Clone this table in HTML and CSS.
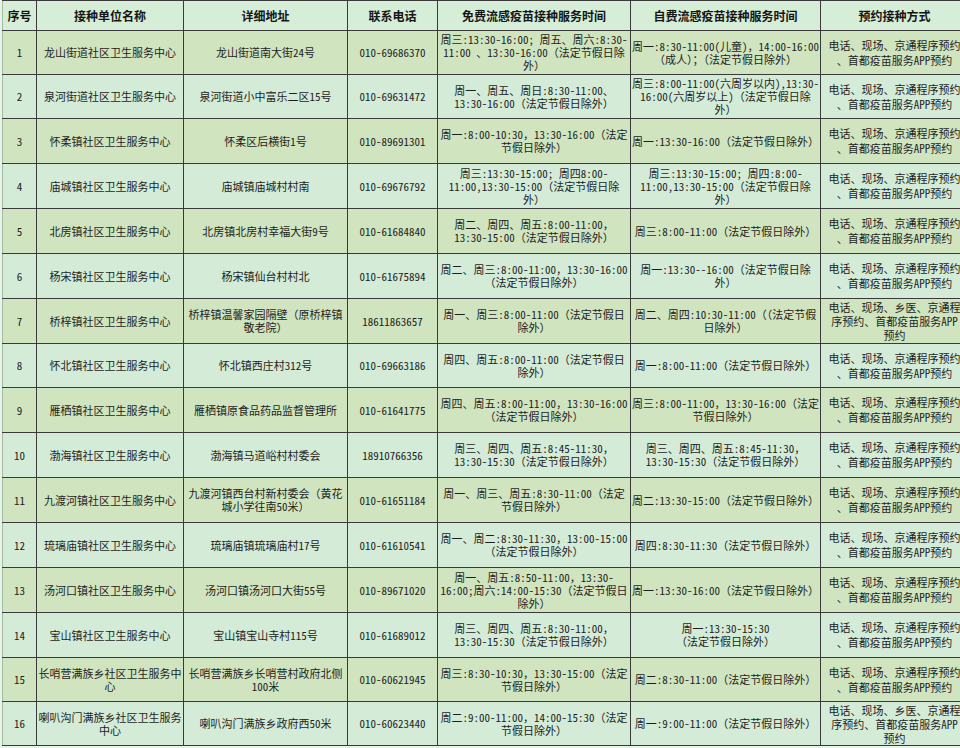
FILE: index.html
```html
<!DOCTYPE html>
<html lang="zh-CN">
<head>
<meta charset="utf-8">
<title>流感疫苗接种服务</title>
<link rel="stylesheet" href="styles.css">
</head>
<body>
<table class="grid">
<colgroup>
<col class="c-no"><col class="c-name"><col class="c-addr"><col class="c-tel"><col class="c-free"><col class="c-self"><col class="c-way">
</colgroup>
<thead>
<tr><th>序号</th><th>接种单位名称</th><th>详细地址</th><th>联系电话</th><th>免费流感疫苗接种服务时间</th><th>自费流感疫苗接种服务时间</th><th>预约接种方式</th></tr>
</thead>
<tbody>
<tr class="odd h44"><td>1</td><td>龙山街道社区卫生服务中心</td><td>龙山街道南大街24号</td><td>010-69686370</td><td class="t3">周三:13:30-16:00; 周五、周六:8:30-<br>11:00 、13:30-16:00（法定节假日除<br>外）</td><td>周一:8:30-11:00(儿童)，14:00-16:00<br>（成人）；（法定节假日除外）</td><td class="way">电话、现场、京通程序预约<br>、首都疫苗服务APP预约</td></tr>
<tr class="even h44"><td>2</td><td>泉河街道社区卫生服务中心</td><td>泉河街道小中富乐二区15号</td><td>010-69631472</td><td>周一、周五、周日:8:30-11:00、<br>13:30-16:00（法定节假日除外）</td><td class="t3">周三:8:00-11:00(六周岁以内),13:30-<br>16:00(六周岁以上)（法定节假日除<br>外）</td><td class="way">电话、现场、京通程序预约<br>、首都疫苗服务APP预约</td></tr>
<tr class="odd h45"><td>3</td><td>怀柔镇社区卫生服务中心</td><td>怀柔区后横街1号</td><td>010-89691301</td><td>周一:8:00-10:30，13:30-16:00（法定<br>节假日除外）</td><td>周一:13:30-16:00（法定节假日除外）</td><td class="way">电话、现场、京通程序预约<br>、首都疫苗服务APP预约</td></tr>
<tr class="even h45"><td>4</td><td>庙城镇社区卫生服务中心</td><td>庙城镇庙城村村南</td><td>010-69676792</td><td class="t3">周三:13:30-15:00; 周四8:00-<br>11:00,13:30-15:00（法定节假日除<br>外）</td><td class="t3">周三:13:30-15:00; 周四:8:00-<br>11:00,13:30-15:00（法定节假日除<br>外）</td><td class="way">电话、现场、京通程序预约<br>、首都疫苗服务APP预约</td></tr>
<tr class="odd h45"><td>5</td><td>北房镇社区卫生服务中心</td><td>北房镇北房村幸福大街9号</td><td>010-61684840</td><td>周二、周四、周五:8:00-11:00，<br>13:30-15:00（法定节假日除外）</td><td>周三:8:00-11:00（法定节假日除外）</td><td class="way">电话、现场、京通程序预约<br>、首都疫苗服务APP预约</td></tr>
<tr class="even h45"><td>6</td><td>杨宋镇社区卫生服务中心</td><td>杨宋镇仙台村村北</td><td>010-61675894</td><td>周二、周三:8:00-11:00，13:30-16:00<br>（法定节假日除外）</td><td>周一:13:30--16:00（法定节假日除<br>外）</td><td class="way">电话、现场、京通程序预约<br>、首都疫苗服务APP预约</td></tr>
<tr class="odd h45"><td>7</td><td>桥梓镇社区卫生服务中心</td><td>桥梓镇温馨家园隔壁（原桥梓镇<br>敬老院）</td><td>18611863657</td><td>周一、周三:8:00-11:00（法定节假日<br>除外）</td><td>周二、周四:10:30-11:00（（法定节假<br>日除外）</td><td class="way t3">电话、现场、乡医、京通程<br>序预约、首都疫苗服务APP<br>预约</td></tr>
<tr class="even h44"><td>8</td><td>怀北镇社区卫生服务中心</td><td>怀北镇西庄村312号</td><td>010-69663186</td><td>周四、周五:8:00-11:00（法定节假日<br>除外）</td><td>周一:8:00-11:00（法定节假日除外）</td><td class="way">电话、现场、京通程序预约<br>、首都疫苗服务APP预约</td></tr>
<tr class="odd h45"><td>9</td><td>雁栖镇社区卫生服务中心</td><td>雁栖镇原食品药品监督管理所</td><td>010-61641775</td><td>周四、周五:8:00-11:00，13:30-16:00<br>（法定节假日除外）</td><td>周三:8:00-11:00，13:30-16:00（法定<br>节假日除外）</td><td class="way">电话、现场、京通程序预约<br>、首都疫苗服务APP预约</td></tr>
<tr class="even h45"><td>10</td><td>渤海镇社区卫生服务中心</td><td>渤海镇马道峪村村委会</td><td>18910766356</td><td>周三、周四、周五:8:45-11:30，<br>13:30-15:30（法定节假日除外）</td><td>周三、周四、周五:8:45-11:30，<br>13:30-15:30（法定节假日除外）</td><td class="way">电话、现场、京通程序预约<br>、首都疫苗服务APP预约</td></tr>
<tr class="odd h45"><td>11</td><td>九渡河镇社区卫生服务中心</td><td>九渡河镇西台村新村委会（黄花<br>城小学往南50米）</td><td>010-61651184</td><td>周一、周三、周五:8:30-11:00（法定<br>节假日除外）</td><td>周二:13:30-15:00（法定节假日除外）</td><td class="way">电话、现场、京通程序预约<br>、首都疫苗服务APP预约</td></tr>
<tr class="even h45"><td>12</td><td>琉璃庙镇社区卫生服务中心</td><td>琉璃庙镇琉璃庙村17号</td><td>010-61610541</td><td>周一、周二:8:30-11:30，13:00-15:00<br>（法定节假日除外）</td><td>周四:8:30-11:30（法定节假日除外）</td><td class="way">电话、现场、京通程序预约<br>、首都疫苗服务APP预约</td></tr>
<tr class="odd h45"><td>13</td><td>汤河口镇社区卫生服务中心</td><td>汤河口镇汤河口大街55号</td><td>010-89671020</td><td class="t3">周一、周五:8:50-11:00，13:30-<br>16:00;周六:14:00-15:30（法定节假日<br>除外）</td><td>周一:13:30-16:00（法定节假日除外）</td><td class="way">电话、现场、京通程序预约<br>、首都疫苗服务APP预约</td></tr>
<tr class="even h45"><td>14</td><td>宝山镇社区卫生服务中心</td><td>宝山镇宝山寺村115号</td><td>010-61689012</td><td>周三、周四、周五:8:30-11:00，<br>13:30-15:30（法定节假日除外）</td><td>周一:13:30-15:30<br>（法定节假日除外）</td><td class="way">电话、现场、京通程序预约<br>、首都疫苗服务APP预约</td></tr>
<tr class="odd h44"><td>15</td><td>长哨营满族乡社区卫生服务中<br>心</td><td>长哨营满族乡长哨营村政府北侧<br>100米</td><td>010-60621945</td><td>周三:8:30-10:30，13:30-15:00（法定<br>节假日除外）</td><td>周二:8:30-11:00（法定节假日除外）</td><td class="way">电话、现场、京通程序预约<br>、首都疫苗服务APP预约</td></tr>
<tr class="even h44"><td>16</td><td>喇叭沟门满族乡社区卫生服务<br>中心</td><td>喇叭沟门满族乡政府西50米</td><td>010-60623440</td><td>周二:9:00-11:00，14:00-15:30（法定<br>节假日除外）</td><td>周一:9:00-11:00（法定节假日除外）</td><td class="way t3">电话、现场、乡医、京通程<br>序预约、首都疫苗服务APP<br>预约</td></tr>
</tbody>
</table>
</body>
</html>
```

FILE: styles.css
```css
html, body {
  margin: 0;
  padding: 0;
  background: #eaf1ea;
  overflow: hidden;
}
body {
  width: 960px;
  height: 748px;
  font-family: "Noto Sans Mono CJK SC", "Noto Sans CJK SC", sans-serif;
  color: #1e1e1e;
}
.grid {
  margin-left: 2px;
  border-collapse: collapse;
  table-layout: fixed;
  width: 966px;
  font-size: 11px;
  line-height: 13px;
}
.c-no { width: 34px; }
.c-name { width: 147px; }
.c-addr { width: 164px; }
.c-tel { width: 90px; }
.c-free { width: 193px; }
.c-self { width: 190px; }
.c-way { width: 148px; }
.grid th, .grid td {
  border: 1px solid #3a3a3a;
  padding: 0;
  text-align: center;
  vertical-align: middle;
  white-space: nowrap;
  overflow: hidden;
}
.grid tr > :first-child { border-left-color: #9fbf9f; }
.grid th {
  height: 29px;
  background: #d6edd7;
  font-size: 12px;
  font-weight: bold;
  color: #151515;
}
.grid .odd td { background: #d0e4bf; }
.grid .even td { background: #d3ebd7; }
.grid .h44 td { height: 43px; }
.grid .h45 td { height: 44px; }
.grid td.t3 { line-height: 13px; }
.grid td.way { line-height: 15px; }
.grid td.way.t3 { line-height: 14px; }
```
